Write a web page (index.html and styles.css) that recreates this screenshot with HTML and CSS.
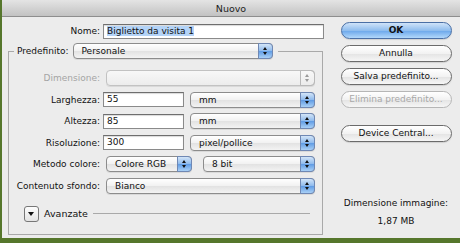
FILE: index.html
```html
<!DOCTYPE html>
<html lang="it">
  <head>
    <meta charset="UTF-8" />
    <title>Nuovo</title>
    <link rel="stylesheet" href="styles.css">
  </head>
  <body>
    <div class="window">
      <div class="titlebar">Nuovo</div>
      <div class="content">
        <div class="main">
          <div class="name-row">
            <span class="label">Nome:</span>
            <span class="input name"><span class="selected">Biglietto da visita 1</span></span>
          </div>

          <fieldset class="preset">
            <legend>
              <span class="legend-label">Predefinito:</span>
              <span class="select preset-select">Personale<span class="arrows"></span></span>
            </legend>

            <div class="form">
              <span class="label disabled">Dimensione:</span>
              <div class="ctrl">
                <span class="select full off"><span class="arrows"></span></span>
              </div>

              <span class="label">Larghezza:</span>
              <div class="ctrl">
                <span class="input num">55</span>
                <span class="select unit">mm<span class="arrows"></span></span>
              </div>

              <span class="label">Altezza:</span>
              <div class="ctrl">
                <span class="input num">85</span>
                <span class="select unit">mm<span class="arrows"></span></span>
              </div>

              <span class="label">Risoluzione:</span>
              <div class="ctrl">
                <span class="input num">300</span>
                <span class="select unit">pixel/pollice<span class="arrows"></span></span>
              </div>

              <span class="label">Metodo colore:</span>
              <div class="ctrl">
                <span class="select mode">Colore RGB<span class="arrows"></span></span>
                <span class="select depth">8 bit<span class="arrows"></span></span>
              </div>

              <span class="label">Contenuto sfondo:</span>
              <div class="ctrl">
                <span class="select full">Bianco<span class="arrows"></span></span>
              </div>
            </div>

            <div class="advanced">
              <span class="disclosure"></span>
              <span>Avanzate</span>
              <span class="rule"></span>
            </div>
          </fieldset>
        </div>

        <div class="side">
          <span class="button default">OK</span>
          <span class="button">Annulla</span>
          <span class="button">Salva predefinito...</span>
          <span class="button off">Elimina predefinito...</span>
          <span class="button central">Device Central...</span>
          <div class="size-info">
            <div>Dimensione immagine:</div>
            <div class="size-value">1,87 MB</div>
          </div>
        </div>
      </div>
    </div>
  </body>
</html>
```

FILE: styles.css
```css
body {
  margin: 0;
  background: #56772c;
  font-family: "DejaVu Sans", Verdana, sans-serif;
  font-size: 9px;
  color: #111;
}
.window {
  width: 458px;
  height: 238px;
  margin-left: 2px;
  background: #ececec;
  border-right: 1px solid #9a9a9a;
}
.titlebar {
  height: 17px;
  line-height: 17px;
  text-align: center;
  font-size: 9.5px;
  color: #222;
  background: linear-gradient(#e4e4e4, #c2c2c2);
  border-bottom: 1px solid #8e8e8e;
  box-sizing: border-box;
}
.content {
  display: flex;
}
.main {
  width: 322px;
  padding-left: 6px;
}
.name-row {
  display: flex;
  align-items: center;
  margin-top: 7px;
  height: 14px;
}
.name-row .label {
  width: 92px;
}
.label {
  text-align: right;
  white-space: nowrap;
}
.label.disabled {
  color: #a4a4a4;
}
.input {
  box-sizing: border-box;
  height: 15px;
  line-height: 13px;
  padding-left: 3px;
  background: #fff;
  border: 1px solid #8a8a8a;
  border-top-color: #6e6e6e;
  box-shadow: inset 0 1px 1px rgba(0, 0, 0, 0.15);
  white-space: nowrap;
}
.name {
  width: 221px;
  margin-left: 3px;
}
.selected {
  background: #b3d3f7;
}
.num {
  width: 81px;
}
.preset {
  margin: 5px 0 0 0;
  padding: 0;
  width: 315px;
  height: 192px;
  box-sizing: border-box;
  border: 1px solid #a9a9a9;
  border-radius: 0;
}
.preset legend {
  display: flex;
  align-items: center;
  padding: 0 5px 0 3px;
  margin-left: 5px;
}
.legend-label {
  margin-right: 4px;
}
.select {
  position: relative;
  box-sizing: border-box;
  display: inline-block;
  height: 16px;
  line-height: 14px;
  padding-left: 8px;
  border: 1px solid #8c8c8c;
  border-radius: 4px;
  background: linear-gradient(#ffffff, #f1f1f1 50%, #e2e2e2 51%, #f3f3f3);
  box-shadow: 0 1px 0 rgba(0, 0, 0, 0.08);
  white-space: nowrap;
}
.arrows {
  position: absolute;
  top: -1px;
  right: -1px;
  width: 15px;
  height: 16px;
  box-sizing: border-box;
  border: 1px solid #6f88b4;
  border-radius: 0 4px 4px 0;
  background: linear-gradient(#d3e5f8, #8db9ec 50%, #5f9be4 51%, #a9d0f6);
}
.arrows::before,
.arrows::after {
  content: "";
  position: absolute;
  left: 4px;
  border-left: 2.5px solid transparent;
  border-right: 2.5px solid transparent;
}
.arrows::before {
  top: 3px;
  border-bottom: 3px solid #111;
}
.arrows::after {
  top: 8px;
  border-top: 3px solid #111;
}
.off .arrows {
  border-color: #b9b9b9;
  background: transparent;
}
.off .arrows::before {
  border-bottom-color: #9a9a9a;
}
.off .arrows::after {
  border-top-color: #9a9a9a;
}
.select.off {
  border-color: #c2c2c2;
  background: linear-gradient(#f8f8f8, #ececec);
}
.preset-select {
  width: 200px;
}
.form {
  display: grid;
  grid-template-columns: 91px 1fr;
  grid-auto-rows: 16px;
  row-gap: 5.5px;
  column-gap: 3px;
  align-items: center;
  margin-top: 11px;
}
.ctrl {
  display: flex;
  align-items: center;
}
.ctrl .select {
  margin-left: 3px;
}
.full {
  width: 209px;
}
.unit {
  width: 125px;
}
.ctrl .input + .select {
  margin-left: 6px;
}
.mode {
  width: 86px;
}
.ctrl .depth {
  width: 112px;
  margin-left: 11px;
}
.advanced {
  display: flex;
  align-items: center;
  gap: 5px;
  margin: 12px 0 0 15px;
  font-size: 9.5px;
}
.disclosure {
  position: relative;
  width: 15px;
  height: 16px;
  box-sizing: border-box;
  border: 1px solid #777;
  border-radius: 3px;
  background: linear-gradient(#fdfdfd, #e4e4e4);
}
.disclosure::after {
  content: "";
  position: absolute;
  left: 3px;
  top: 5px;
  border-left: 3.5px solid transparent;
  border-right: 3.5px solid transparent;
  border-top: 4px solid #111;
}
.rule {
  flex: 1;
  height: 1px;
  margin: 0 12px 0 0;
  background: #a9a9a9;
}
.side {
  display: flex;
  flex-direction: column;
  align-items: center;
  width: 128px;
  padding-top: 5px;
  margin-left: 2px;
}
.button {
  box-sizing: border-box;
  width: 111px;
  height: 17px;
  line-height: 15px;
  margin-bottom: 6px;
  text-align: center;
  border: 1px solid #6b6b6b;
  border-radius: 9px;
  background: linear-gradient(#ffffff, #f2f2f2 50%, #e3e3e3 51%, #f6f6f6);
  box-shadow: 0 1px 1px rgba(0, 0, 0, 0.12);
  white-space: nowrap;
}
.button.default {
  font-weight: bold;
  border-color: #4a6fa5;
  background: linear-gradient(#cfe3f9, #8fbdee 50%, #6aa6ea 51%, #b2d8fb);
}
.button.off {
  color: #a8a8a8;
  border-color: #b6b6b6;
  box-shadow: none;
}
.button.central {
  margin-top: 11px;
}
.size-info {
  margin-top: 46px;
  text-align: center;
  line-height: 18px;
}
```
